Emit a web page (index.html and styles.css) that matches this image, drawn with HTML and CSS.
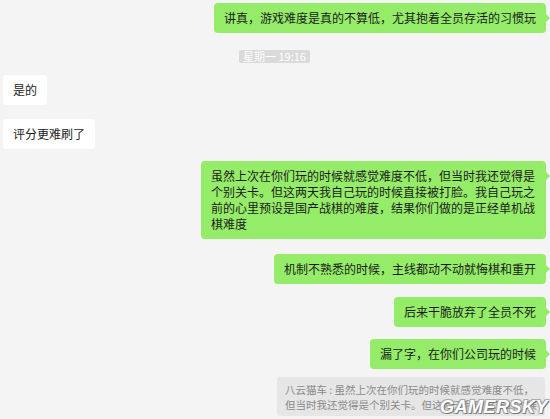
FILE: index.html
```html
<!DOCTYPE html>
<html lang="zh-CN">
<head>
    <meta charset="UTF-8">
    <meta name="viewport" content="width=device-width, initial-scale=1.0">
    <title>聊天记录</title>
    <link rel="stylesheet" href="styles.css">
</head>
<body>
    <div class="chat">
        <div class="row me first">
            <div class="bubble green">讲真，游戏难度是真的不算低，尤其抱着全员存活的习惯玩</div>
        </div>
        <div class="time"><span>星期一 19:16</span></div>
        <div class="row other">
            <div class="bubble white">是的</div>
        </div>
        <div class="row other gap-14">
            <div class="bubble white">评分更难刷了</div>
        </div>
        <div class="row me">
            <div class="bubble green wide">虽然上次在你们玩的时候就感觉难度不低，但当时我还觉得是个别关卡。但这两天我自己玩的时候直接被打脸。我自己玩之前的心里预设是国产战棋的难度，结果你们做的是正经单机战棋难度</div>
        </div>
        <div class="row me gap-15">
            <div class="bubble green">机制不熟悉的时候，主线都动不动就悔棋和重开</div>
        </div>
        <div class="row me gap-13">
            <div class="bubble green">后来干脆放弃了全员不死</div>
        </div>
        <div class="row me">
            <div class="bubble green">漏了字，在你们公司玩的时候</div>
        </div>
        <div class="row me quote-row">
            <div class="quote">
                <div class="quote-line">八云猫车 : 虽然上次在你们玩的时候就感觉难度不低，</div>
                <div class="quote-line">但当时我还觉得是个别关卡。但这两天我自己玩的时候直接被打脸。</div>
            </div>
        </div>
    </div>
    <div class="watermark">GAMERSKY</div>
</body>
</html>
```

FILE: styles.css
```css
* {
    box-sizing: border-box;
}
body {
    margin: 0;
    padding: 0;
    width: 550px;
    height: 419px;
    overflow: hidden;
    background: #f4f4f4;
    font-family: "Noto Sans CJK SC", "Microsoft YaHei", sans-serif;
    color: #1b1b1b;
    position: relative;
}
.chat {
    display: flex;
    flex-direction: column;
    padding: 3px 4px 0 3px;
}
.row {
    display: flex;
    margin-top: 12px;
}
.row.first {
    margin-top: 0;
}
.row.me {
    justify-content: flex-end;
}
.row.other {
    justify-content: flex-start;
}
.gap-13 {
    margin-top: 13px;
}
.gap-14 {
    margin-top: 14px;
}
.gap-15 {
    margin-top: 15px;
}
.bubble {
    position: relative;
    font-size: 12px;
    line-height: 16px;
    padding: 7px 10px;
    border-radius: 4px;
}
.bubble.green {
    background: #95ec69;
}
.bubble.green::after {
    content: '';
    position: absolute;
    right: -4px;
    top: 11px;
    border-top: 4px solid transparent;
    border-bottom: 4px solid transparent;
    border-left: 4px solid #95ec69;
}
.bubble.white {
    background: #fff;
}
.bubble.wide {
    width: 345px;
}
.time {
    display: flex;
    justify-content: center;
    margin-top: 17px;
}
.time span {
    background: #dadada;
    color: #fff;
    font-size: 11px;
    line-height: 13px;
    padding: 0 4px;
    border-radius: 2px;
}
.quote-row {
    margin-top: 8px;
}
.quote {
    width: 268px;
    background: #e6e6e6;
    color: #8a8a8a;
    font-size: 10.5px;
    line-height: 15px;
    padding: 5px 8px 4px 8px;
    border-radius: 3px;
    margin-right: 1px;
}
.quote-line {
    white-space: nowrap;
    overflow: hidden;
}
.watermark {
    position: absolute;
    right: 2px;
    bottom: 1px;
    font-family: "Liberation Sans", sans-serif;
    font-weight: bold;
    font-style: italic;
    font-size: 18px;
    letter-spacing: 0.5px;
    color: #fff;
    text-shadow: 1px 1px 0 #777, -1px -1px 0 #aaa, 1px -1px 0 #aaa, -1px 1px 0 #aaa;
}
```
